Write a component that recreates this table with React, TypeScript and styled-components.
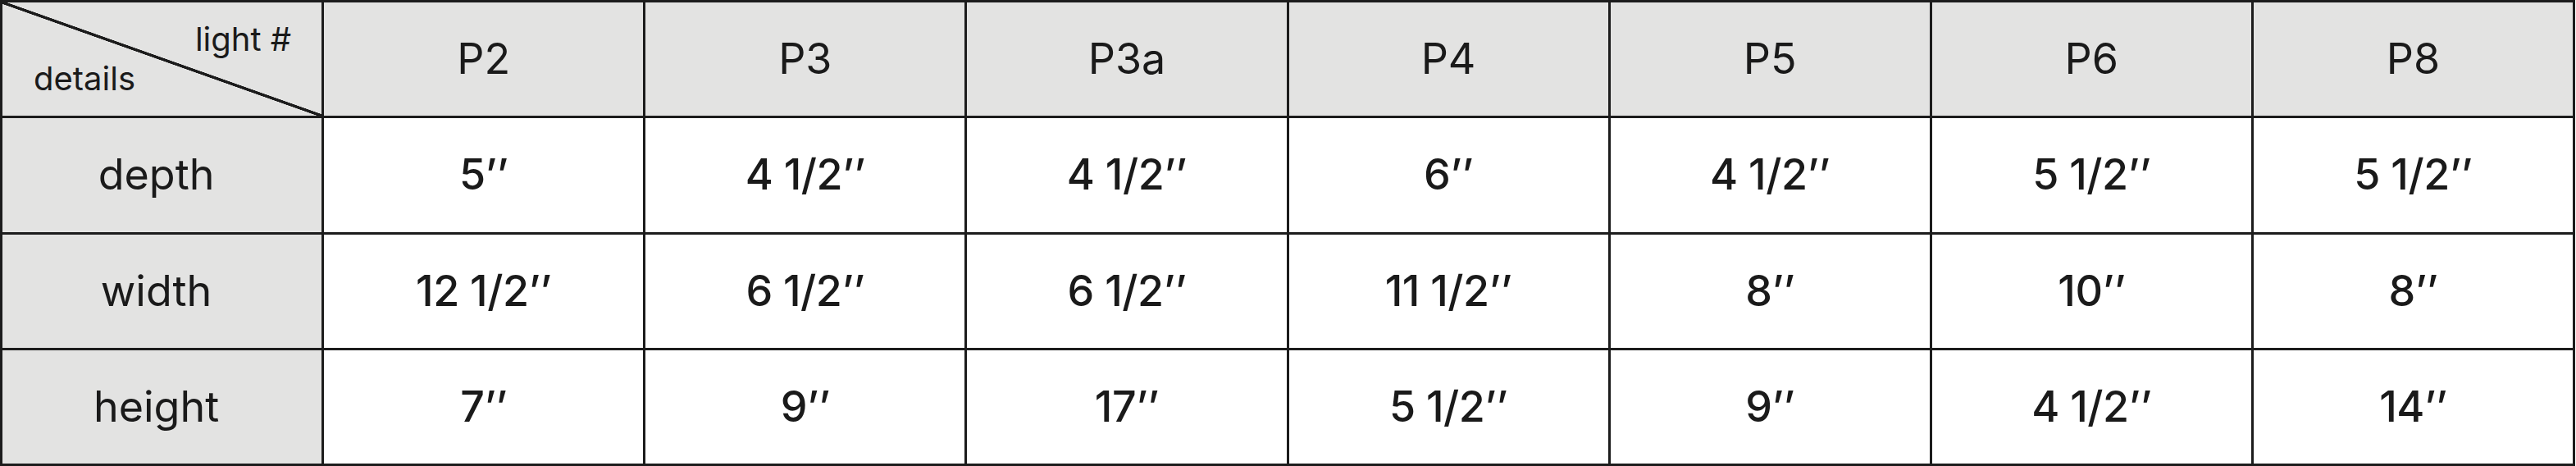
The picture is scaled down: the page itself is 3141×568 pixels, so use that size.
import React from "react";
import styled, { createGlobalStyle } from "styled-components";

const GlobalStyle = createGlobalStyle`
  html, body {
    margin: 0;
    padding: 0;
    background: #ffffff;
  }
  body {
    font-family: Inter, "Noto Sans", "Liberation Sans", sans-serif;
    color: #1a1a1a;
  }
`;

const LINE = "#1c1c1c";
const GREY = "#e3e3e2";

const Table = styled.div`
  box-sizing: border-box;
  width: 3140px;
  height: 568px;
  display: grid;
  grid-template-columns: repeat(8, 1fr);
  grid-template-rows: repeat(4, 1fr);
  gap: 3px;
  padding: 3px;
  background: ${LINE};
`;

const Cell = styled.div`
  display: flex;
  align-items: center;
  justify-content: center;
  font-size: 52px;
  line-height: 1;
  color: #1a1a1a;
  white-space: nowrap;
`;

const HeadCell = styled(Cell)`
  background: ${GREY};
  font-weight: 400;
`;

const LabelCell = styled(Cell)`
  background: ${GREY};
  font-weight: 400;
  padding-right: 14px;
`;

const ValueCell = styled(Cell)`
  background: #ffffff;
  font-weight: 500;
  letter-spacing: -0.5px;
`;

const CornerCell = styled.div`
  box-sizing: border-box;
  display: grid;
  grid-template-rows: 1fr 1fr;
  padding: 25px 37px 25px 38px;
  background:
    linear-gradient(
      to top right,
      transparent calc(50% - 2px),
      ${LINE} calc(50% - 1.5px),
      ${LINE} calc(50% + 1.5px),
      transparent calc(50% + 2px)
    ),
    ${GREY};
  font-size: 40px;
  line-height: 1;
  font-weight: 400;
`;

const CornerTop = styled.span`
  justify-self: end;
  align-self: start;
`;

const CornerBottom = styled.span`
  justify-self: start;
  align-self: end;
`;

const lights = ["P2", "P3", "P3a", "P4", "P5", "P6", "P8"];

const q = "\u2019\u2019";

const rows: { label: string; values: string[] }[] = [
  { label: "depth", values: ["5", "4 1/2", "4 1/2", "6", "4 1/2", "5 1/2", "5 1/2"] },
  { label: "width", values: ["12 1/2", "6 1/2", "6 1/2", "11 1/2", "8", "10", "8"] },
  { label: "height", values: ["7", "9", "17", "5 1/2", "9", "4 1/2", "14"] },
];

export default function App() {
  return (
    <>
      <GlobalStyle />
      <Table>
        <CornerCell>
          <CornerTop>light #</CornerTop>
          <CornerBottom>details</CornerBottom>
        </CornerCell>
        {lights.map((l) => (
          <HeadCell key={l}>{l}</HeadCell>
        ))}
        {rows.map((r) => (
          <React.Fragment key={r.label}>
            <LabelCell>{r.label}</LabelCell>
            {r.values.map((v, i) => (
              <ValueCell key={i}>
                {v}
                {q}
              </ValueCell>
            ))}
          </React.Fragment>
        ))}
      </Table>
    </>
  );
}
